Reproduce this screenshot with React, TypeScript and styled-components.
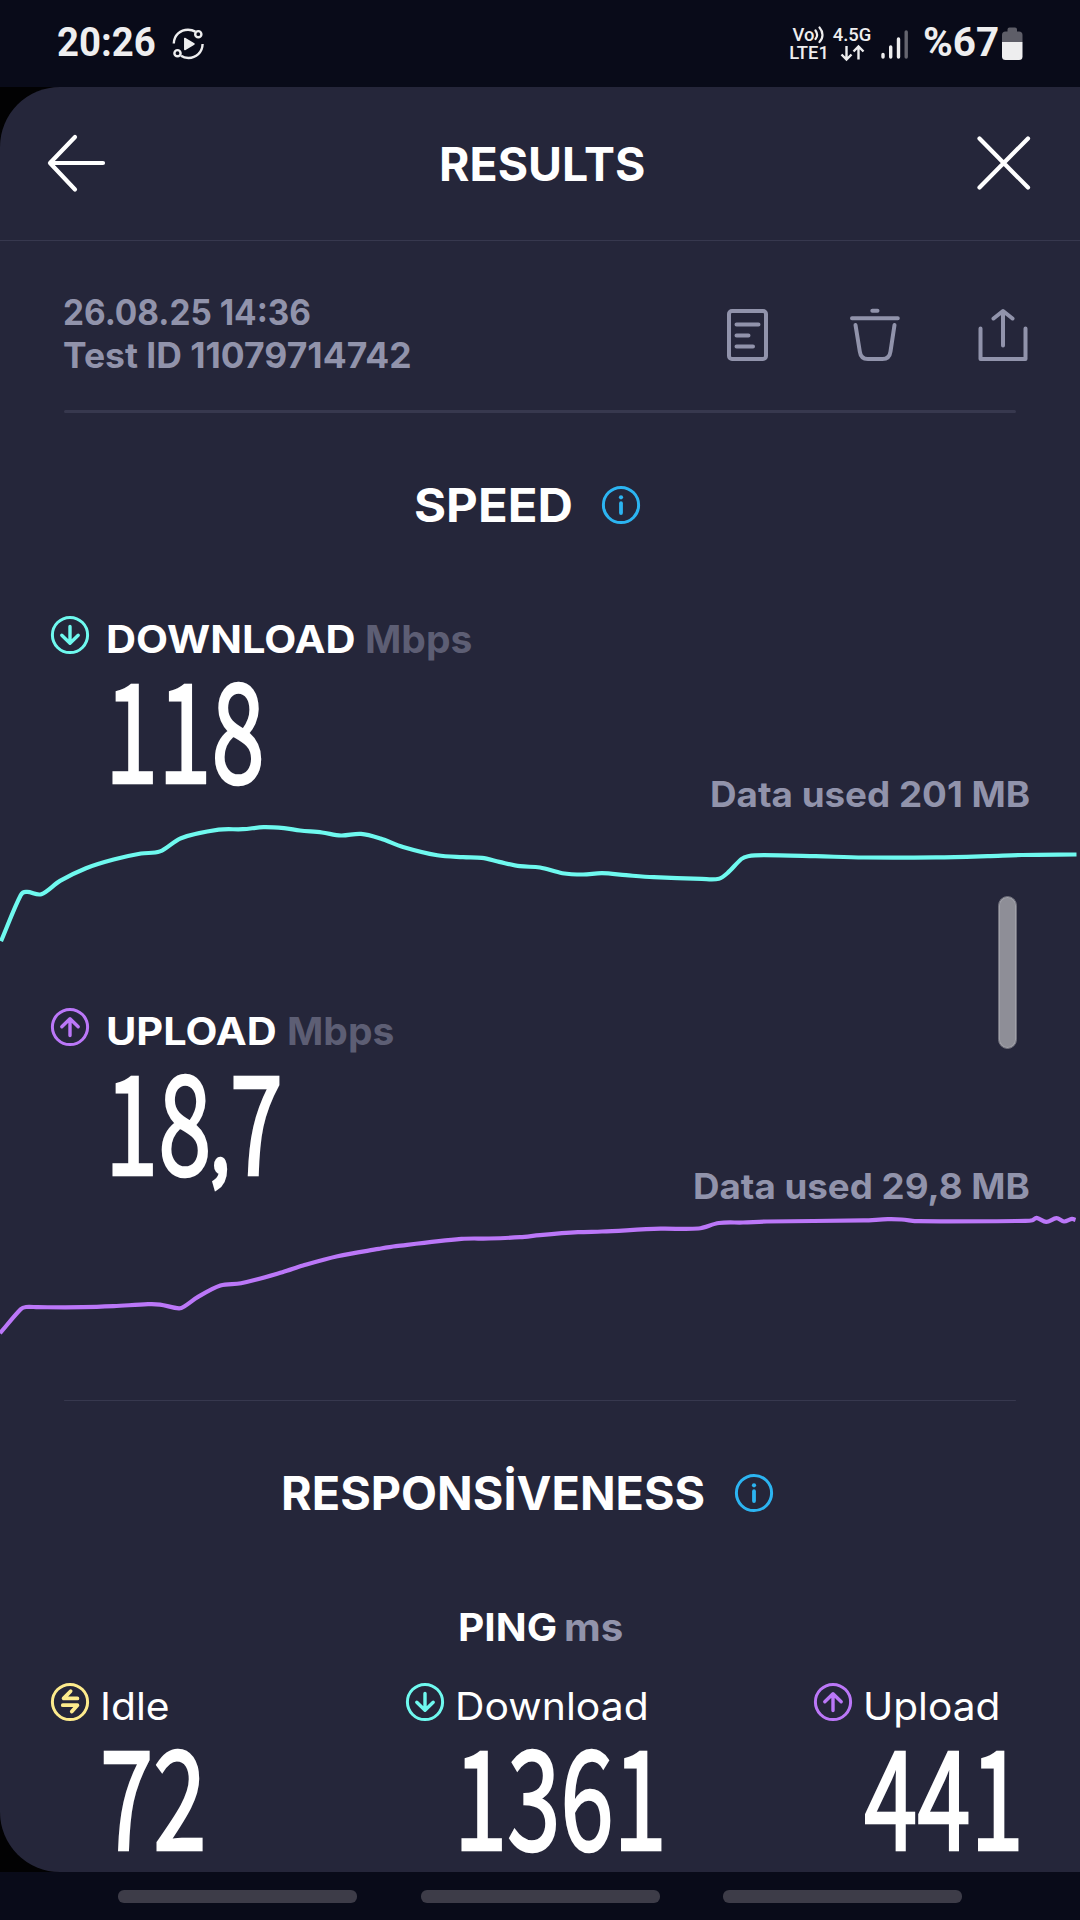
import React from 'react';
import styled, { createGlobalStyle } from 'styled-components';

const color = {
  bar: '#090b19',
  sheet: '#25263a',
  rule: '#37384e',
  muted: '#9193ab',
  dim: '#5d5e74',
  cyan: '#6ff9ef',
  violet: '#bb77f8',
  yellow: '#fdeb8d',
  blue: '#2cb4f1',
};

const GlobalStyle = createGlobalStyle`
  * { box-sizing: border-box; }
  body { margin: 0; background: #020203; }
`;

const Screen = styled.div`
  width: 1080px;
  height: 1920px;
  display: flex;
  flex-direction: column;
  overflow: hidden;
  background: #020203;
  color: #fff;
  font-family: Inter, 'Liberation Sans', sans-serif;
`;

/* A run of text set to an exact measure; $k widens or narrows the letterforms. */
const Run = styled.span<{ $w: number; $k: number; $size: number; $weight?: number; $tint?: string; $pull?: number; $drop?: number }>`
  display: block;
  flex: none;
  width: ${(p) => p.$w / p.$k}px;
  margin-left: ${(p) => -(p.$pull ?? 0)}px;
  margin-right: ${(p) => p.$w - p.$w / p.$k}px;
  padding-top: ${(p) => p.$drop ?? 0}px;
  font-size: ${(p) => p.$size}px;
  font-weight: ${(p) => p.$weight ?? 700};
  color: ${(p) => p.$tint ?? 'inherit'};
  white-space: nowrap;
  transform: scaleX(${(p) => p.$k});
  transform-origin: left center;
`;

const StatusBar = styled.header`
  height: 87px;
  flex: none;
  display: flex;
  justify-content: space-between;
  background: ${color.bar};
  color: #eeeeef;
  font-family: Roboto, sans-serif;
  padding: 0 57px;
`;

const StatusGroup = styled.div`
  display: flex;
  height: 83px;
  align-items: center;
`;

const CastBox = styled.div`
  display: flex;
  margin: 4px 0 0 16px;
`;

const Stack = styled.div<{ $w: number; $gap?: number }>`
  width: ${(p) => p.$w}px;
  margin-right: ${(p) => p.$gap ?? 0}px;
  height: 36px;
  margin-top: 5px;
  display: flex;
  flex-direction: column;
  align-items: center;
  font-size: 18.4px;
  font-weight: 500;
  line-height: 18px;
  white-space: nowrap;
`;

const StackLine = styled.div`
  display: flex;
  align-items: center;
  height: 18px;
`;

const SignalBox = styled.div`
  display: flex;
  margin: 5px 14px 0 0;
`;

const BatteryBox = styled.div`
  display: flex;
  margin: 4px 0 0 5px;
`;

const Sheet = styled.main`
  position: relative;
  height: 1785px;
  flex: none;
  border-radius: 60px 0 0 60px;
  background: ${color.sheet};
  overflow: hidden;
  display: flex;
  flex-direction: column;
`;

const TitleBar = styled.div`
  height: 154px;
  flex: none;
  display: flex;
  justify-content: space-between;
  align-items: center;
  padding: 0 48px 1px 46px;
  border-bottom: 1px solid ${color.rule};
`;

const IconButton = styled.button`
  border: 0;
  padding: 0;
  background: none;
  color: inherit;
  display: flex;
  cursor: pointer;
`;

const Meta = styled.section`
  height: 169px;
  flex: none;
  display: flex;
  justify-content: space-between;
  padding: 50px 50px 0 63px;
  color: ${color.muted};
  line-height: 43px;
`;

const Actions = styled.div`
  display: flex;
  gap: 76px;
  padding-top: 16px;
`;

const Rule = styled.hr<{ $h: number; $top?: number }>`
  flex: none;
  width: 952px;
  height: ${(p) => p.$h}px;
  margin: ${(p) => p.$top ?? 0}px 64px 0;
  border: 0;
  border-radius: 2px;
  background: ${color.rule};
`;

const SectionTitle = styled.h2<{ $left: number }>`
  margin: 0 0 17px;
  flex: none;
  height: 184px;
  padding-left: ${(p) => p.$left}px;
  display: flex;
  align-items: center;
  gap: 29px;
`;

const Measure = styled.section`
  height: 392px;
  flex: none;
  display: flex;
  flex-direction: column;
`;

const Label = styled.div<{ $gap: number }>`
  display: flex;
  align-items: center;
  height: 50px;
  gap: ${(p) => p.$gap}px;
  svg { margin-top: -9px; flex: none; }
`;

const MeasureHead = styled.div`
  padding-left: 50px;
  height: 155px;
  flex: none;
`;

const Value = styled.div<{ $left: number }>`
  margin-left: ${(p) => p.$left}px;
  height: 120px;
  line-height: 118px;
  font-family: 'Noto Sans CJK JP', sans-serif;
  font-size: 137.5px;
  font-weight: 400;
  white-space: nowrap;
  transform: scaleX(0.697);
  transform-origin: left center;
  -webkit-text-stroke: 2.6px #fff;
  stroke-linejoin: round;
`;

const Comma = styled.span`
  display: inline-block;
  font-size: 88px;
  line-height: 1;
  vertical-align: 4px;
  margin: 0 2px 0 0;
  -webkit-text-stroke-width: 6px;
`;

const DataUsed = styled.div`
  height: 50px;
  flex: none;
  display: flex;
  justify-content: flex-end;
  align-items: center;
  padding-right: 50px;
`;

const Chart = styled.svg`
  display: block;
  width: 1080px;
  height: 140px;
  flex: none;
`;

const PingTitle = styled.div`
  height: 50px;
  flex: none;
  display: flex;
  align-items: center;
  padding-left: 458px;
  gap: 6px;
`;

const PingRow = styled.div`
  display: grid;
  grid-template-columns: 355px 408px 1fr;
  padding: 29px 0 0 50px;
`;

const ScrollThumb = styled.div`
  position: absolute;
  top: 809px;
  right: 63px;
  width: 19px;
  height: 153px;
  border-radius: 10px;
  background: #8e8e97;
  border: 1px solid #6f6f7b;
  box-shadow: inset 0 0 0 1px #a0a0a8;
`;

const NavBar = styled.nav`
  height: 48px;
  flex: none;
  background: ${color.bar};
  display: flex;
  gap: 63.5px;
  padding: 18px 0 0 118px;
`;

const Pill = styled.div`
  width: 239px;
  height: 13px;
  border-radius: 6px;
  background: #3d3c48;
`;

type Point = [number, number];

function smooth(points: Point[]) {
  const n = points.length;
  let d = `M${points[0][0]} ${points[0][1]}`;
  for (let i = 0; i < n - 1; i++) {
    const a = points[Math.max(i - 1, 0)];
    const b = points[i];
    const c = points[i + 1];
    const e = points[Math.min(i + 2, n - 1)];
    const step = (c[0] - b[0]) / 3;
    const m1 = (c[1] - a[1]) / (c[0] - a[0]);
    const m2 = (e[1] - b[1]) / (e[0] - b[0]);
    d += ` C${b[0] + step} ${b[1] + m1 * step} ${c[0] - step} ${c[1] - m2 * step} ${c[0]} ${c[1]}`;
  }
  return d;
}

const downloadTrace: Point[] = [
  [1, 941], [20.7, 895], [26.9, 891.7], [41.3, 894], [60, 880.7], [86, 868], [113.6, 859.3], [141, 853.3],
  [160, 851.2], [181, 838], [218.7, 829.5], [242.8, 829], [263.4, 827], [284, 828], [300, 830.3], [322, 832.3],
  [341, 835.3], [361, 833.7], [380.5, 838.3], [403, 846.7], [437.3, 855], [463, 857], [482, 857.7],
  [499.3, 861.7], [520, 866], [540, 867.3], [562.4, 873], [583, 874.3], [602, 873], [626, 875], [653.6, 877],
  [701.8, 878.7], [719, 878.5], [727.7, 872.7], [741.4, 858.8], [748, 856], [764, 855], [815.5, 856],
  [863.7, 857.3], [936, 857.2], [987.7, 856], [1022, 854.8], [1076.5, 854.3],
];

const uploadTrace: Point[] = [
  [0, 1333], [20.7, 1309], [26, 1306.8], [38, 1307], [82.6, 1307], [113.6, 1306], [148, 1304], [160, 1304.4],
  [179, 1308.2], [184.2, 1306.3], [198, 1296.7], [220.4, 1285.3], [241, 1283], [282.4, 1272], [303, 1265.3],
  [337.5, 1256], [378.8, 1248.7], [396, 1246], [461.4, 1238.7], [489, 1238.3], [520, 1237], [540, 1234.9],
  [578, 1232], [602, 1231.3], [660.5, 1228.5], [698.4, 1228.3], [719, 1222.8], [743, 1222.3], [767, 1221.3],
  [863.7, 1220.2], [887.8, 1219], [901.6, 1219.3], [918.8, 1221], [1025.5, 1220.7], [1032.4, 1220],
  [1036.5, 1217.7], [1046.2, 1221.7], [1056.5, 1218], [1064, 1221.3], [1072, 1218.7], [1075.5, 1219.7],
];

const RingIcon = ({ kind, tint }: { kind: 'down' | 'up' | 'swap' | 'info'; tint: string }) => (
  <svg width="40" height="40" viewBox="0 0 40 40" fill="none" stroke={tint} strokeLinecap="round" strokeLinejoin="round">
    <circle cx="20" cy="20" r="17.6" strokeWidth="3" />
    {kind === 'down' && <path d="M20 11.5V28M11.8 20.3L20 28.3L28.2 20.3" strokeWidth="3.4" />}
    {kind === 'up' && <path d="M20 28.5V12M11.8 19.7L20 11.7L28.2 19.7" strokeWidth="3.4" />}
    {kind === 'swap' && <path d="M20.6 9.2L13.6 16.4H27.4M12.8 23.2H27.4L21.8 29.6" strokeWidth="3.8" />}
    {kind === 'info' && (
      <>
        <path d="M20 18.2V28" strokeWidth="3.8" />
        <circle cx="20" cy="12.3" r="2.1" fill={tint} stroke="none" />
      </>
    )}
  </svg>
);

const CastIcon = () => (
  <svg width="34" height="34" viewBox="0 0 34 34" fill="none" stroke="#eeeeef" strokeWidth="2.4">
    <path d="M2.8 16.5C3 8 9.5 2.8 17 2.8C19.7 2.8 22 3.3 24.4 4.6" />
    <path d="M31.6 17C31.4 25.5 25 31 17.5 31C15 31 12.3 30.5 10 28.8" />
    <circle cx="27.3" cy="7.2" r="3.1" />
    <circle cx="6.5" cy="26.2" r="3.1" />
    <path d="M13.8 11.5V22.5L23 17Z" fill="#eeeeef" strokeWidth="1.5" strokeLinejoin="round" />
  </svg>
);

type MeasureProps = {
  name: string;
  nameWidth: number;
  nameScale: number;
  kind: 'down' | 'up';
  tint: string;
  value: React.ReactNode;
  used: string;
  usedWidth: number;
  usedScale: number;
  trace: Point[];
  top: number;
};

const SpeedMeasure = (p: MeasureProps) => (
  <Measure>
    <MeasureHead>
      <Label $gap={16}>
        <RingIcon kind={p.kind} tint={p.tint} />
        <Run $w={p.nameWidth} $k={p.nameScale} $size={38.3}>{p.name}</Run>
        <Run $w={105} $k={1.018} $size={38.3} $tint={color.dim} $pull={5}>Mbps</Run>
      </Label>
      <Value $left={55}>{p.value}</Value>
    </MeasureHead>
    <DataUsed>
      <Run $w={p.usedWidth} $k={p.usedScale} $size={35.3} $tint={color.muted}>{p.used}</Run>
    </DataUsed>
    <Chart viewBox={`0 ${p.top} 1080 140`}>
      <path d={smooth(p.trace)} fill="none" stroke={p.tint} strokeWidth="4.2" />
    </Chart>
  </Measure>
);

const PingCell = ({ kind, tint, name, w, k, value, left }: {
  kind: 'down' | 'up' | 'swap'; tint: string; name: string; w: number; k: number; value: string; left: number;
}) => (
  <div>
    <Label $gap={10}>
      <RingIcon kind={kind} tint={tint} />
      <Run $w={w} $k={k} $size={38.5} $weight={400}>{name}</Run>
    </Label>
    <Value $left={left}>{value}</Value>
  </div>
);

export default function App() {
  return (
    <Screen>
      <GlobalStyle />
      <StatusBar>
        <StatusGroup>
          <Run $w={98} $k={0.935} $size={41}>20:26</Run>
          <CastBox><CastIcon /></CastBox>
        </StatusGroup>
        <StatusGroup>
          <Stack $w={38} $gap={6}>
            <StackLine>
              Vo
              <svg width="11" height="18" viewBox="0 0 11 18" fill="none" stroke="#eeeeef" strokeWidth="2.2" strokeLinecap="round">
                <path d="M1.5 4.5C3.6 7.5 3.6 10.5 1.5 13M5.5 1.5C9.5 6 9.5 12 5.5 16" />
              </svg>
            </StackLine>
            <StackLine>LTE1</StackLine>
          </Stack>
          <Stack $w={36} $gap={11}>
            <StackLine>4.5G</StackLine>
            <StackLine>
              <svg width="26" height="18" viewBox="0 0 26 18" fill="none" stroke="#eeeeef" strokeWidth="2.4">
                <path d="M7.5 2V15.5M2.5 10.5L7.5 15.5L12.5 10.5M19.5 15.5V2.5M14.5 7.5L19.5 2.5L24.5 7.5" />
              </svg>
            </StackLine>
          </Stack>
          <SignalBox>
            <svg width="28" height="32" viewBox="0 0 28 32" strokeWidth="3.4" strokeLinecap="round">
              <path d="M2 26.5V29M9.7 19V29M17.5 11V29" stroke="#eeeeef" />
              <path d="M25.2 4V29" stroke="#65656f" />
            </svg>
          </SignalBox>
          <Run $w={74} $k={0.985} $size={41}>%67</Run>
          <BatteryBox>
            <svg width="21" height="33" viewBox="0 0 21 33">
              <path d="M0 15V8Q0 4.5 3.5 4.5H5.5V2.5Q5.5 .5 7.5 .5H13Q15 .5 15 2.5V4.5H17Q20.5 4.5 20.5 8V15Z" fill="#5e5e68" />
              <path d="M0 15H20.5V29.5Q20.5 33 17 33H3.5Q0 33 0 29.5Z" fill="#eeeeef" />
            </svg>
          </BatteryBox>
        </StatusGroup>
      </StatusBar>

      <Sheet>
        <TitleBar>
          <IconButton>
            <svg width="60" height="60" viewBox="0 0 60 60" fill="none" stroke="#fff" strokeWidth="4.2" strokeLinecap="round" strokeLinejoin="round">
              <path d="M57 30H4.5M29 4L4 30L29 56.5" />
            </svg>
          </IconButton>
          <Run $w={205} $k={0.998} $size={46.5} $drop={2}>RESULTS</Run>
          <IconButton>
            <svg width="56" height="56" viewBox="0 0 56 56" fill="none" stroke="#fff" strokeWidth="4.2" strokeLinecap="round">
              <path d="M3.5 3.5L52 52.5M52 3.5L3.5 52.5" />
            </svg>
          </IconButton>
        </TitleBar>

        <Meta>
          <div>
            <Run $w={248} $k={0.945} $size={35.3}>26.08.25 14:36</Run>
            <Run $w={348} $k={1.005} $size={35.3}>Test ID 11079714742</Run>
          </div>
          <Actions>
            <IconButton>
              <svg width="46" height="56" viewBox="0 0 46 56" fill="none" stroke="currentColor" strokeWidth="4" strokeLinecap="round">
                <rect x="3" y="4" width="37" height="48" rx="3" />
                <path d="M10.5 17.5H32.5M10.5 28.5H22.5M10.5 39.5H27" />
              </svg>
            </IconButton>
            <IconButton>
              <svg width="52" height="56" viewBox="0 0 52 56" fill="none" stroke="currentColor" strokeWidth="4" strokeLinecap="round">
                <path d="M24.3 3.8H29.5M4 11.2H49.8M7.5 18L11.8 44.5Q12.8 52 19.8 52H34.5Q41.5 52 42.5 44.5L46.5 18" />
              </svg>
            </IconButton>
            <IconButton>
              <svg width="54" height="56" viewBox="0 0 54 56" fill="none" stroke="currentColor" strokeWidth="4" strokeLinecap="round" strokeLinejoin="round">
                <path d="M4.5 21.5V52H49.5V21.5M27 38.5V5M17.5 11.5L27 4L36.5 11.5" />
              </svg>
            </IconButton>
          </Actions>
        </Meta>
        <Rule $h={3} />

        <SectionTitle $left={414}>
          <Run $w={158} $k={1.055} $size={46.5}>SPEED</Run>
          <RingIcon kind="info" tint={color.blue} />
        </SectionTitle>

        <SpeedMeasure name="DOWNLOAD" nameWidth={248} nameScale={1.086} kind="down" tint={color.cyan} value="118"
          used="Data used 201 MB" usedWidth={320} usedScale={1.042} trace={downloadTrace} top={818.8} />
        <SpeedMeasure name="UPLOAD" nameWidth={170} nameScale={1.083} kind="up" tint={color.violet} value={<>18<Comma>,</Comma>7</>}
          used="Data used 29,8 MB" usedWidth={337.5} usedScale={1.04} trace={uploadTrace} top={1210.8} />

        <Rule $h={1} $top={2} />
        <SectionTitle $left={281}>
          <Run $w={424} $k={1.006} $size={46.5}>RESPONSİVENESS</Run>
          <RingIcon kind="info" tint={color.blue} />
        </SectionTitle>

        <PingTitle>
          <Run $w={100} $k={1.06} $size={38.3}>PING</Run>
          <Run $w={59} $k={1.05} $size={38.3} $tint={color.muted}>ms</Run>
        </PingTitle>
        <PingRow>
          <PingCell kind="swap" tint={color.yellow} name="Idle" w={70} k={1.06} value="72" left={50} />
          <PingCell kind="down" tint={color.cyan} name="Download" w={194} k={1.062} value="1361" left={49} />
          <PingCell kind="up" tint={color.violet} name="Upload" w={137} k={1.055} value="441" left={51} />
        </PingRow>
        <ScrollThumb />
      </Sheet>

      <NavBar>
        <Pill />
        <Pill />
        <Pill />
      </NavBar>
    </Screen>
  );
}
